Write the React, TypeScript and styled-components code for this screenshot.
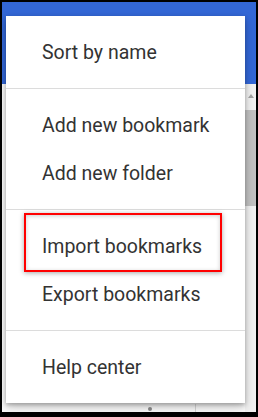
import * as React from "react";
import styled, {createGlobalStyle, css} from "styled-components";

const GlobalStyle = createGlobalStyle`
    html, body {
        margin: 0;
        padding: 0;
        background: #000;
    }
    body {
        font-family: Roboto, "Noto Sans", "Liberation Sans", sans-serif;
    }
`;

const Frame = styled.div`
    position: relative;
    display: flex;
    flex-direction: column;
    width: 254px;
    height: 410px;
    margin: 2px 2px 5px 2px;
    background: #fafafa;
    overflow: hidden;
`;

const Header = styled.div`
    height: 82px;
    background: #3367d6;
    flex-shrink: 0;
`;

const Body = styled.div`
    flex: 1;
    display: flex;
    flex-direction: row;
`;

// page content peeking out below the menu
const Content = styled.div`
    flex: 1;
    display: flex;
    align-items: flex-end;
    padding-left: 146px;
`;

const Dot = styled.span`
    width: 4px;
    height: 4px;
    border-radius: 50%;
    background: #8a8a8a;
    margin-bottom: 1px;
`;

const Rule = styled.span`
    width: 1px;
    height: 8px;
    margin-left: 43px;
    background: #d6d6d6;
`;

const Scrollbar = styled.div`
    width: 11px;
    display: flex;
    flex-direction: column;
    background: #f1f1f1;
`;

const ScrollArrow = styled.div`
    height: 24px;
    display: flex;
    align-items: center;
    justify-content: center;
    &::before {
        content: "";
        border-left: 3px solid transparent;
        border-right: 3px solid transparent;
        border-bottom: 4px solid #a3a3a3;
    }
`;

const ScrollThumb = styled.div`
    height: 96px;
    margin-top: 2px;
    background: #c1c1c1;
`;

const Menu = styled.div`
    position: absolute;
    left: 4px;
    top: 14px;
    width: 239px;
    background: #fff;
    box-shadow: 0 2px 4px rgba(0, 0, 0, 0.25), 0 4px 10px rgba(0, 0, 0, 0.2);
`;

const Section = styled.div`
    padding: 12px 0;
    & + & {
        border-top: 1px solid #dcdcdc;
    }
`;

const Item = styled.div<{highlighted?: boolean}>`
    position: relative;
    height: 48px;
    display: flex;
    align-items: center;
    padding-left: 36px;
    font-size: 19.5px;
    color: #333;
    ${props => props.highlighted && css`
        &::after {
            content: "";
            position: absolute;
            top: -9px;
            left: 18px;
            right: 23px;
            bottom: -2px;
            border: 2px solid #f00;
            box-shadow: 0 1px 5px rgba(0, 0, 0, 0.35), inset 0 1px 4px rgba(0, 0, 0, 0.2);
        }
    `}
`;

const sections = [
    ["Sort by name"],
    ["Add new bookmark", "Add new folder"],
    ["Import bookmarks", "Export bookmarks"],
    ["Help center"],
];

export default function App() {
    return (
        <>
            <GlobalStyle/>
            <Frame>
                <Header/>
                <Body>
                    <Content>
                        <Dot/>
                        <Rule/>
                    </Content>
                    <Scrollbar>
                        <ScrollArrow/>
                        <ScrollThumb/>
                    </Scrollbar>
                </Body>
                <Menu>
                    {sections.map((items, i) => (
                        <Section key={i}>
                            {items.map(label => (
                                <Item key={label} highlighted={label === "Import bookmarks"}>{label}</Item>
                            ))}
                        </Section>
                    ))}
                </Menu>
            </Frame>
        </>
    );
}
